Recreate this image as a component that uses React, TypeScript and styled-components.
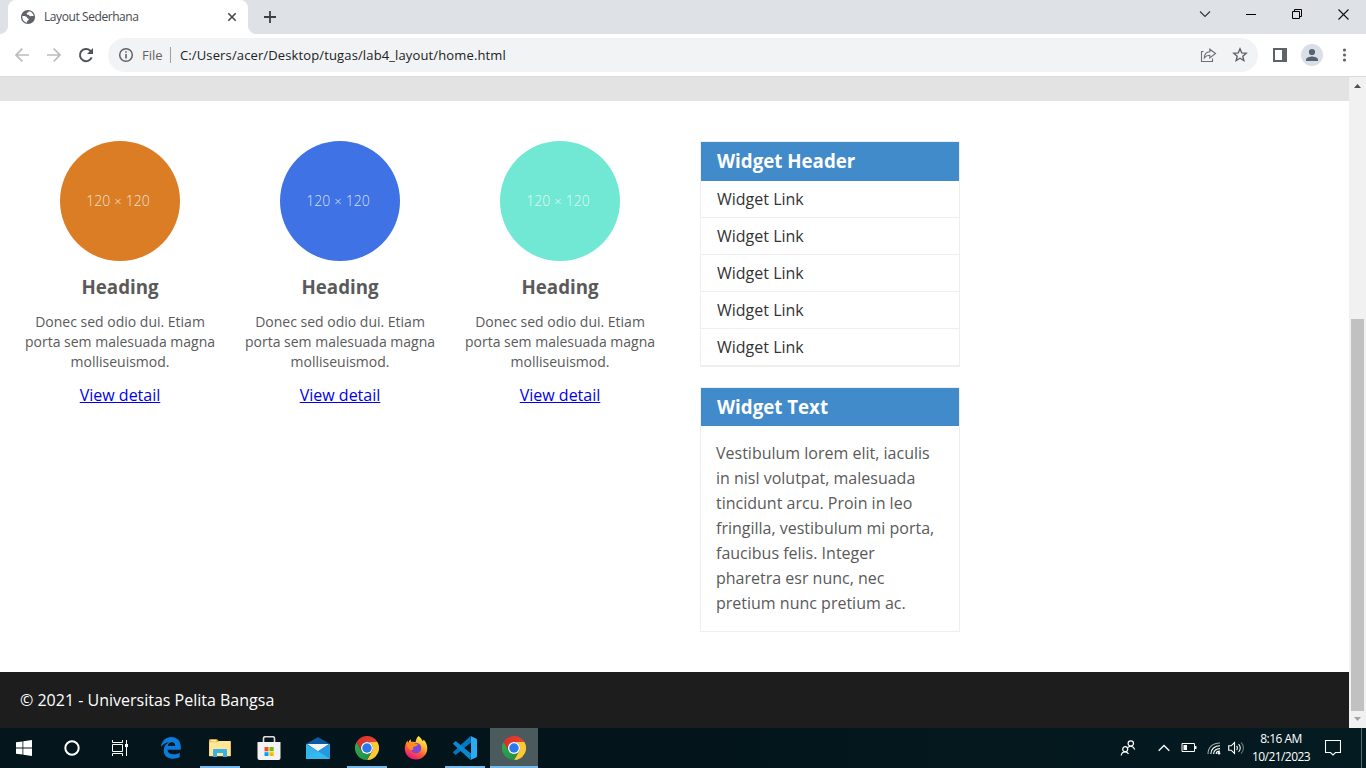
import React from "react";
import styled, { createGlobalStyle, css } from "styled-components";

const Global = createGlobalStyle`
  * { box-sizing: border-box; }
  html, body { margin: 0; padding: 0; overflow: hidden; }
  body { font-family: "Open Sans", "Liberation Sans", sans-serif; font-size: 16px; color: #5a5a5a; background: #fff; }
  svg { display: block; flex: none; }
  h3, p, ul { margin: 0; padding: 0; }
`;

const Screen = styled.div`
  width: 1366px;
  height: 768px;
  display: flex;
  flex-direction: column;
  overflow: hidden;
`;

/* Browser chrome */
const TabStrip = styled.header`
  height: 34px;
  flex: none;
  display: flex;
  background: #dee1e6;
`;
const TabFoot = styled.div<{ $side: "left" | "right" }>`
  width: 8px;
  height: 8px;
  align-self: flex-end;
  background: radial-gradient(circle at ${(p) => (p.$side === "left" ? "0 0" : "100% 0")}, #dee1e6 7.5px, #fff 8.3px);
`;
const Tab = styled.div`
  width: 240px;
  display: flex;
  align-items: center;
  padding: 0 9px 0 12px;
  background: #fff;
  border-radius: 8px 8px 0 0;
`;
const TabTitle = styled.span`
  flex: 1;
  margin-left: 8px;
  font-size: 12px;
  letter-spacing: -0.42px;
  line-height: 16px;
  color: #45494d;
`;
const NewTab = styled.div`
  margin-left: 8px;
  display: flex;
  align-items: center;
`;
const WindowControls = styled.div`
  margin-left: auto;
  display: flex;
  height: 28px;
`;
const WindowButton = styled.div`
  width: 46px;
  display: flex;
  align-items: center;
  justify-content: center;
`;
const Toolbar = styled.div`
  height: 43px;
  flex: none;
  display: flex;
  align-items: center;
  background: #fff;
  border-bottom: 1px solid #d9dbdd;
`;
const NavButtons = styled.div`
  width: 108px;
  display: flex;
  gap: 12px;
  padding-left: 12px;
`;
const AddressBar = styled.div`
  width: 1150px;
  height: 34px;
  display: flex;
  align-items: center;
  padding: 0 8px;
  border-radius: 17px;
  background: #f1f3f4;
`;
const Scheme = styled.span`
  width: 28px;
  margin-left: 6px;
  padding-right: 7px;
  font-size: 13px;
  line-height: 18px;
  color: #5f6368;
`;
const Divider = styled.span`
  width: 1px;
  height: 16px;
  background: #9aa0a6;
`;
const Url = styled.span`
  flex: 1;
  margin-left: 9px;
  font-size: 13px;
  letter-spacing: 0.13px;
  line-height: 18px;
  white-space: nowrap;
  color: #202124;
`;
const BarActions = styled.div`
  display: flex;
  gap: 12px;
`;
const ToolActions = styled.div`
  display: flex;
  align-items: center;
  gap: 11px;
  padding-left: 12px;
`;
const Avatar = styled.div`
  width: 22px;
  height: 22px;
  border-radius: 50%;
  background: #dadfe6;
`;

/* Page */
const Viewport = styled.div`
  height: 651px;
  flex: none;
  display: flex;
`;
const Page = styled.div`
  width: 1349px;
  display: flex;
  flex-direction: column;
  background: #fff;
`;
const HeroEdge = styled.div`
  height: 24px;
  flex: none;
  background: #e3e3e3;
`;
const Wrapper = styled.main`
  flex: 1;
  display: flex;
  align-items: flex-start;
  padding: 40px 0 0 10px;
`;
const Features = styled.section`
  display: flex;
  width: 690px;
`;
const Feature = styled.article`
  width: 220px;
  padding: 0 10px;
  display: flex;
  flex-direction: column;
  align-items: center;
  text-align: center;
`;
const Circle = styled.div<{ $color: string }>`
  width: 120px;
  height: 120px;
  padding: 0 4px 1px 0;
  display: flex;
  align-items: center;
  justify-content: center;
  gap: 4px;
  border-radius: 50%;
  background: ${(p) => p.$color};
  color: rgba(255, 255, 255, 0.8);
  font-size: 14px;
  font-weight: 300;
`;
const Times = styled.span`
  font-size: 13px;
`;
const FeatureTitle = styled.h3`
  margin-top: 12px;
  font-size: 18.72px;
  font-weight: 700;
  line-height: 28px;
`;
const FeatureText = styled.p`
  margin-top: 11px;
  font-size: 14px;
  line-height: 20px;
`;
const DetailLink = styled.a`
  margin-top: 12px;
  line-height: 22px;
  color: #0000ee;
  text-decoration: underline;
`;
const Sidebar = styled.aside`
  width: 260px;
  display: flex;
  flex-direction: column;
  gap: 20px;
`;
const Widget = styled.section`
  border: 1px solid #eee;
`;
const WidgetTitle = styled.h3<{ $height: number }>`
  height: ${(p) => p.$height}px;
  padding-left: 16px;
  font-size: 18.72px;
  font-weight: 700;
  line-height: 38px;
  color: #fff;
  background: #428bca;
`;
const WidgetLinks = styled.ul`
  list-style: none;
`;
const WidgetLink = styled.li`
  height: 37px;
  padding-left: 16px;
  line-height: 36px;
  color: #333;
  border-bottom: 1px solid #eee;
`;
const WidgetText = styled.p`
  padding: 15px;
  line-height: 25px;
`;
const PageFooter = styled.footer`
  height: 56px;
  flex: none;
  padding-left: 20px;
  line-height: 56px;
  color: #fff;
  background: #1d1d1d;
`;
const Scrollbar = styled.div`
  width: 17px;
  display: flex;
  flex-direction: column;
  align-items: center;
  justify-content: space-between;
  background: #f1f1f1;
`;
const Thumb = styled.div`
  width: 13px;
  height: 392px;
  margin-top: auto;
  background: #c1c1c1;
`;

/* Taskbar */
const Taskbar = styled.footer`
  height: 40px;
  flex: none;
  display: flex;
  color: #fff;
  background: linear-gradient(90deg, #04161b, #03151a 50%, #041b21);
`;
const SystemSlots = styled.div`
  display: flex;
  margin-right: 3px;
`;
const AppSlots = styled.div`
  display: flex;
  gap: 1px;
`;
const Slot = styled.div<{ $state?: "running" | "active" }>`
  width: 48px;
  height: 40px;
  display: flex;
  align-items: center;
  justify-content: center;
  ${(p) => p.$state === "running" && css`
    background: linear-gradient(#76b9ed, #76b9ed) center bottom / 40px 2px no-repeat;
  `}
  ${(p) => p.$state === "active" && css`
    background: linear-gradient(#76b9ed, #76b9ed) center bottom / 48px 2px no-repeat, #4b5a5d;
  `}
`;
const Tray = styled.div`
  margin-left: auto;
  display: flex;
  align-items: center;
`;
const TrayIcon = styled.div<{ $width: number }>`
  width: ${(p) => p.$width}px;
  display: flex;
  justify-content: center;
`;
const Clock = styled.div`
  width: 58px;
  display: flex;
  flex-direction: column;
  align-items: center;
  font-size: 12px;
  line-height: 18px;
  letter-spacing: -0.55px;
  white-space: nowrap;
`;
const DesktopPeek = styled.div`
  width: 5px;
  height: 40px;
  border-left: 1px solid #5d6c70;
`;

const Chrome = ({ id }: { id: string }) => (
  <svg width="24" height="24" viewBox="0 0 48 48">
    <defs>
      <linearGradient id={id + "r"} x1="0" x2="1"><stop stopColor="#d93025" /><stop offset="1" stopColor="#ea4335" /></linearGradient>
      <linearGradient id={id + "g"} x1="0" x2="1" y2="1"><stop stopColor="#34a853" /><stop offset="1" stopColor="#1e8e3e" /></linearGradient>
    </defs>
    <path d="M24 12h20.8A24 24 0 0 1 24 48l10.4-18A12 12 0 0 0 24 12z" fill="#fcc934" />
    <path d="M34.4 30 24 48A24 24 0 0 1 3.2 12l10.4 18a12 12 0 0 0 20.8 0z" fill={`url(#${id}g)`} />
    <path d="M13.6 30 3.2 12a24 24 0 0 1 41.6 0H24a12 12 0 0 0-10.4 18z" fill={`url(#${id}r)`} />
    <circle cx="24" cy="24" r="12" fill="#fff" />
    <circle cx="24" cy="24" r="9.5" fill="#2b78ee" />
  </svg>
);

const features = ["#da7d24", "#3e72e5", "#71e8d4"];
const links = [1, 2, 3, 4, 5];

export default function App() {
  return (
    <Screen>
      <Global />
      <TabStrip>
        <TabFoot $side="left" />
        <Tab>
          <svg width="16" height="16" viewBox="0 0 16 16">
            <circle cx="8" cy="8" r="7.1" fill="#5f6368" />
            <path d="M2.3 7.1c2.1-.3 4.4.2 4.7 1.4.3 1 1.7.8 1.8 1.9.1.9-1.5.9-1.7 1.9-.1.6.2 1.2-.3 1.5C3.700 13.100 2 10.600 2.300 7.100zM8.900 2.200c-.3 1.200-1.600 1.200-2.200 2-.5.8.4 1.500 1.500 1.500 1.200 0 1 1.300 2.200 1.500 1.300.1 2-.5 3.400 0C13.500 4.700 11.500 2.500 8.900 2.200z" fill="#fff" />
          </svg>
          <TabTitle>Layout Sederhana</TabTitle>
          <svg width="14" height="14" viewBox="0 0 14 14"><path d="m3.300 3.300 7.400 7.400m0-7.400-7.400 7.400" stroke="#45494d" strokeWidth="1.6" /></svg>
        </Tab>
        <TabFoot $side="right" />
        <NewTab>
          <svg width="12" height="12" viewBox="0 0 12 12"><path d="M6 0v12M0 6h12" stroke="#3c4043" strokeWidth="1.8" /></svg>
        </NewTab>
        <WindowControls>
          <WindowButton><svg width="12" height="8" viewBox="0 0 12 8"><path d="m1 1.500 5 5 5-5" fill="none" stroke="#333" strokeWidth="1.1" /></svg></WindowButton>
          <WindowButton><svg width="10" height="2" viewBox="0 0 10 2"><path d="M0 1.500h10" stroke="#000" /></svg></WindowButton>
          <WindowButton><svg width="10" height="10" viewBox="0 0 10 10"><path d="M.5 2.500h7v7h-7zM2.500 2.500v-2h7v7h-2" fill="none" stroke="#000" /></svg></WindowButton>
          <WindowButton><svg width="11" height="11" viewBox="0 0 11 11"><path d="m.5.5 10 10m0-10-10 10" stroke="#111" strokeWidth="1.100" /></svg></WindowButton>
        </WindowControls>
      </TabStrip>
      <Toolbar>
        <NavButtons>
          <svg width="20" height="20" viewBox="0 0 20 20"><path d="M17 10H4m6.300-6.300L4 10l6.300 6.300" fill="none" stroke="#babcbe" strokeWidth="1.700" /></svg>
          <svg width="20" height="20" viewBox="0 0 20 20"><path d="M3 10h13M9.700 3.700 16 10l-6.300 6.300" fill="none" stroke="#babcbe" strokeWidth="1.700" /></svg>
          <svg width="20" height="20" viewBox="0 0 20 20">
            <path d="M15.700 12.300A6.100 6.100 0 1 1 14.300 5.700L16 7.400" fill="none" stroke="#4f5357" strokeWidth="1.900" />
            <path d="M17 3v6h-6z" fill="#4f5357" />
          </svg>
        </NavButtons>
        <AddressBar>
          <svg width="20" height="20" viewBox="0 0 20 20">
            <circle cx="10" cy="10" r="6.300" fill="none" stroke="#5f6368" strokeWidth="1.500" />
            <path d="M10 9v4.500M10 6.300v1.500" stroke="#5f6368" strokeWidth="1.600" />
          </svg>
          <Scheme>File</Scheme>
          <Divider />
          <Url>C:/Users/acer/Desktop/tugas/lab4_layout/home.html</Url>
          <BarActions>
            <svg width="20" height="20" viewBox="0 0 20 20" fill="none" stroke="#6b6f73" strokeWidth="1.100">
              <path d="M5.500 6.500h-2v10h11v-3" /><path d="M11.800 4.200v2.600c-3.500.2-5.300 2.500-5.500 6 1.400-1.900 3-2.600 5.500-2.600v2.700l5.700-4.400z" />
            </svg>
            <svg width="20" height="20" viewBox="0 0 20 20"><path d="m10 3.800 1.750 4.100 4.450.4-3.400 2.900 1.050 4.350L10 13.200l-3.850 2.350L7.200 11.200 3.800 8.300l4.450-.4z" fill="none" stroke="#5f6368" strokeWidth="1.400" /></svg>
          </BarActions>
        </AddressBar>
        <ToolActions>
          <svg width="20" height="20" viewBox="0 0 20 20"><path d="M3 3h14v14H3zM5 5v10h7V5z" fill="#5f6368" fillRule="evenodd" /></svg>
          <Avatar><svg width="22" height="22" viewBox="0 0 22 22" fill="#566176"><circle cx="11" cy="8" r="3.100" /><path d="M5 17v-1.500c0-2 4-3 6-3s6 1 6 3V17z" /></svg></Avatar>
          <svg width="22" height="20" viewBox="0 0 22 20" fill="#5f6368"><circle cx="10.500" cy="5" r="1.600" /><circle cx="10.500" cy="10" r="1.600" /><circle cx="10.500" cy="15" r="1.600" /></svg>
        </ToolActions>
      </Toolbar>

      <Viewport>
        <Page>
          <HeroEdge />
          <Wrapper>
            <Features>
              {features.map((color) => (
                <Feature key={color}>
                  <Circle $color={color}><span>120</span><Times>×</Times><span>120</span></Circle>
                  <FeatureTitle>Heading</FeatureTitle>
                  <FeatureText>Donec sed odio dui. Etiam porta sem malesuada magna molliseuismod.</FeatureText>
                  <DetailLink href="#">View detail</DetailLink>
                </Feature>
              ))}
            </Features>
            <Sidebar>
              <Widget>
                <WidgetTitle $height={39}>Widget Header</WidgetTitle>
                <WidgetLinks>{links.map((n) => <WidgetLink key={n}>Widget Link</WidgetLink>)}</WidgetLinks>
              </Widget>
              <Widget>
                <WidgetTitle $height={38}>Widget Text</WidgetTitle>
                <WidgetText>Vestibulum lorem elit, iaculis in nisl volutpat, malesuada tincidunt arcu. Proin in leo fringilla, vestibulum mi porta, faucibus felis. Integer pharetra esr nunc, nec pretium nunc pretium ac.</WidgetText>
              </Widget>
            </Sidebar>
          </Wrapper>
          <PageFooter>© 2021 - Universitas Pelita Bangsa</PageFooter>
        </Page>
        <Scrollbar>
          <svg width="17" height="17" viewBox="0 0 17 17"><path d="m5 11 3.500-4 3.500 4z" fill="#505050" /></svg>
          <Thumb />
          <svg width="17" height="17" viewBox="0 0 17 17"><path d="m5 6 3.500 4L12 6z" fill="#a3a3a3" /></svg>
        </Scrollbar>
      </Viewport>

      <Taskbar>
        <SystemSlots>
          <Slot><svg width="16" height="16" viewBox="0 0 16 16" fill="#fff"><path d="M0 2.300 6.500 1.400v6.200H0zM7.300 1.300 16 0v7.600H7.300zM0 8.400h6.500v6.200L0 13.700zM7.300 8.400H16V16l-8.700-1.300z" /></svg></Slot>
          <Slot><svg width="16" height="16" viewBox="0 0 16 16"><circle cx="8" cy="8" r="6.700" fill="none" stroke="#fff" strokeWidth="2" /></svg></Slot>
          <Slot>
            <svg width="16" height="16" viewBox="0 0 16 16" fill="none" stroke="#fff">
              <path d="M.5 0v2.500h10V0M.5 4.500h10v7H.5zM.5 16v-2.500h10V16M14.500 0v4M14.500 7v9" /><path d="M13 4h3v3h-3z" fill="#fff" stroke="none" />
            </svg>
          </Slot>
        </SystemSlots>
        <AppSlots>
          <Slot>
            <svg width="22" height="22" viewBox="0 0 22 22"><path d="M.8 10.200C1.800 3.500 6.200 0 11.300 0 17.300 0 20.800 4.300 20.800 10v2.700H7.500c.2 3.200 2.900 4.600 6.200 4.600 2.300 0 4.300-.6 6-1.600v4.400c-2 1.200-4.300 1.700-6.800 1.700C7.200 21.800 3.700 18.500 3.700 13.600c0-3.700 2.100-6.700 5.300-8.300C5.500 5.600 2.800 7.300.8 10.200zM7.700 9.100h7.500c0-2.300-1.100-3.900-3.400-3.900-2 0-3.700 1.600-4.100 3.900z" fill="#0b7bdc" /></svg>
          </Slot>
          <Slot $state="running">
            <svg width="22" height="18" viewBox="0 0 22 18">
              <path d="M0 1.500Q0 .2 1 .2h7l1.500 1.800H21q.8 0 .8 1V17H0z" fill="#f0bd45" /><path d="M.3 3.300 9.500 3l1-1h11v15.200H.3z" fill="#ffe697" /><path d="M2 .8h5v1.500H2z" fill="#fff1c0" />
              <path d="M4 18v-7q0-1 1-1h12q1 0 1 1v7h-4v-4H8v4z" fill="#38b0e8" />
            </svg>
          </Slot>
          <Slot>
            <svg width="24" height="24" viewBox="0 0 24 24">
              <path d="M6.500 8V2.500Q6.500.7 8.300.7h7.400q1.800 0 1.800 1.800V8" fill="none" stroke="#ddd" strokeWidth="1.600" />
              <path d="M.5 6h23v16q0 2-2 2h-19q-2 0-2-2z" fill="#f3f3f3" /><path d="M7.500 11h4v4.300h-4z" fill="#f25022" /><path d="M12.500 11h4.200v4.300h-4.200z" fill="#7fba00" /><path d="M7.500 16.200h4V20h-4z" fill="#00a4ef" /><path d="M12.500 16.200h4.200V20h-4.200z" fill="#ffb900" />
            </svg>
          </Slot>
          <Slot>
            <svg width="24" height="22" viewBox="0 0 24 22">
              <path d="M0 7 12 0l12 7v8H0z" fill="#0c59a4" /><path d="M0 7v15h24z" fill="#32b5ee" /><path d="M24 7v15H0z" fill="#35baf0" />
              <path d="m1 7 11 7.300L23 7z" fill="#f4f4f4" /><path d="m12 14.300 12-7.300v15z" fill="#2399df" />
            </svg>
          </Slot>
          <Slot $state="running"><Chrome id="a" /></Slot>
          <Slot>
            <svg width="24" height="24" viewBox="0 0 24 24">
              <defs><linearGradient id="fx" x1=".8" y1="0" x2=".3" y2="1"><stop stopColor="#fff44f" /><stop offset=".35" stopColor="#ffbd2f" /><stop offset=".65" stopColor="#ff5a36" /><stop offset="1" stopColor="#e3128b" /></linearGradient></defs>
              <path d="M14.500 0c2.300 1.500 3.200 3.300 4.100 5 .9-.4 1-1 1-1.500 2.600 2.500 3.700 5.800 3.700 9A11.200 11.200 0 0 1 12 23.500C5.500 23.500.8 18.700.8 12.500.8 9.500 2 6.500 3.400 4.500L4.200 7c.6-1.500 1.400-2.900 2.500-3.700L7.300 6c1.900-.4 3-.1 4.200.3.4-2.500 1.300-4.700 3-6.300z" fill="url(#fx)" />
              <circle cx="12" cy="12" r="5.300" fill="#8046d9" />
              <path d="M2.800 8.500c2-2.700 5.500-3 8-1 1.300 0 2.500.3 3.200 1-1 1.800-3.200 1.800-4.400 2.400-1 .6-.9 2-.2 3C5.500 15 3.300 11.500 2.800 8.500z" fill="#ff8b20" />
            </svg>
          </Slot>
          <Slot $state="running">
            <svg width="24" height="24" viewBox="0 0 24 24">
              <path d="M17.500 0 18 6.400 3.200 18.400q-.6.500-1.200 0L.4 17q-.7-.6 0-1.200z" fill="#0079c5" />
              <path d="M17.500 24 .4 8.200q-.7-.6 0-1.200L2 5.500q.6-.5 1.200 0L18 17.600z" fill="#0b88d2" />
              <path d="M17.500 0 23 2.600q1 .4 1 1.500v15.800q0 1.100-1 1.500L17.500 24q.5-.8.500-2V2q0-1.200-.5-2z" fill="#2aabf2" />
            </svg>
          </Slot>
          <Slot $state="active"><Chrome id="b" /></Slot>
        </AppSlots>
        <Tray>
          <TrayIcon $width={32}>
            <svg width="16" height="16" viewBox="0 0 16 16" fill="none" stroke="#fff" strokeWidth="1.200"><circle cx="10.800" cy="3.500" r="2.700" /><circle cx="5.200" cy="9.200" r="2.500" /><path d="M1.200 15.500c.3-2.300 1.700-3.700 4-3.700 1.500 0 2.700.8 3.300 2.200M8 7.500c1.700-1.800 5.500-2 6.700 2" /></svg>
          </TrayIcon>
          <TrayIcon $width={40}><svg width="12" height="8" viewBox="0 0 12 8"><path d="m.7 6.700 5.300-5.200 5.300 5.200" fill="none" stroke="#fff" strokeWidth="1.300" /></svg></TrayIcon>
          <TrayIcon $width={9}><svg width="16" height="10" viewBox="0 0 16 10"><path d="M1 .5h12.500v8H1z" fill="none" stroke="#fff" /><path d="M2.500 2H6v5H2.500zM14 3h1.500v3H14z" fill="#fff" /></svg></TrayIcon>
          <TrayIcon $width={41}>
            <svg width="14" height="14" viewBox="0 0 14 14" fill="none" strokeWidth="1.100"><path d="M1 13C1 6 6 2 13 2" stroke="#a5b0b3" /><path d="M3.800 13c0-5 4-8.200 9.200-8.200M6.600 13c0-3.500 2.600-5.400 6.400-5.400M9.200 13c0-1.800 1.500-2.900 3.800-2.900" stroke="#fff" /><circle cx="12" cy="12.300" r="1.300" fill="#fff" /></svg>
          </TrayIcon>
          <TrayIcon $width={4}>
            <svg width="17" height="14" viewBox="0 0 17 14" fill="none" stroke="#fff" strokeWidth="1.100"><path d="M.7 4.800h2.500l3.300-3.300v11L3.200 9.200H.7zM8.600 5c1 1 1 3 0 4M10.600 3.200c2.200 2 2.200 5.600 0 7.600" /><path d="M13 1.500c3.300 3 3.300 8 0 11" stroke="#65757a" /></svg>
          </TrayIcon>
          <TrayIcon $width={14} />
          <Clock><span>8:16 AM</span><span>10/21/2023</span></Clock>
          <TrayIcon $width={46}>
            <svg width="16" height="16" viewBox="0 0 16 16"><path d="M.5.5h15v12h-5L8 15l-2.500-2.500h-5z" fill="none" stroke="#fff" strokeWidth="1.100" /></svg>
          </TrayIcon>
          <TrayIcon $width={5} />
          <DesktopPeek />
        </Tray>
      </Taskbar>
    </Screen>
  );
}
